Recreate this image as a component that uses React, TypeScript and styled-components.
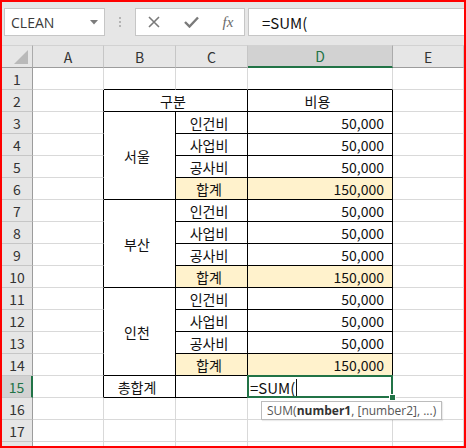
import React from "react";
import styled, { createGlobalStyle } from "styled-components";

const GRID = "#d9d9d9";
const INK = "#000000";
const GREEN = "#217346";
const FILL = "#fff2cc";
const COLS = ["A", "B", "C", "D", "E"];

const GlobalStyle = createGlobalStyle`
  html, body {
    margin: 0;
    padding: 0;
    background: #ffffff;
  }
  body {
    font-family: "Noto Sans CJK KR", "Noto Sans", sans-serif;
  }
`;

type CellDef = {
  r: number;
  c: number;
  rs?: number;
  cs?: number;
  text?: string;
  align?: "left" | "center" | "right";
  fill?: boolean;
};

const inTable = (r: number, c: number) => r >= 2 && r <= 15 && c >= 1 && c <= 3;

const groups = [
  { name: "서울", start: 3 },
  { name: "부산", start: 7 },
  { name: "인천", start: 11 },
];
const items = ["인건비", "사업비", "공사비"];

const buildCells = (): CellDef[] => {
  const list: CellDef[] = [];
  const covered = new Set<string>();
  const add = (d: CellDef) => {
    for (let i = 0; i < (d.rs || 1); i++)
      for (let j = 0; j < (d.cs || 1); j++) covered.add(`${d.r + i}-${d.c + j}`);
    list.push(d);
  };

  add({ r: 2, c: 1, cs: 2, text: "구분", align: "center" });
  add({ r: 2, c: 3, text: "비용", align: "center" });
  groups.forEach((g) => {
    add({ r: g.start, c: 1, rs: 4, text: g.name, align: "center" });
    items.forEach((it, i) => {
      add({ r: g.start + i, c: 2, text: it, align: "center" });
      add({ r: g.start + i, c: 3, text: "50,000", align: "right" });
    });
    add({ r: g.start + 3, c: 2, text: "합계", align: "center", fill: true });
    add({ r: g.start + 3, c: 3, text: "150,000", align: "right", fill: true });
  });
  add({ r: 15, c: 1, text: "총합계", align: "center" });
  add({ r: 15, c: 2 });

  // the rest is plain empty grid
  for (let r = 1; r <= 18; r++)
    for (let c = 0; c < 5; c++) if (!covered.has(`${r}-${c}`) && !(r === 15 && c === 3)) list.push({ r, c });
  return list;
};

const cells = buildCells();

const App: React.FC = () => {
  return (
    <>
      <GlobalStyle />
      <Frame>
        <FormulaBar>
          <NameBox>
            <span>CLEAN</span>
            <svg width="8" height="5" viewBox="0 0 8 5">
              <polygon points="0,0 8,0 4,4.5" fill="#7c7c7c" />
            </svg>
          </NameBox>
          <Grip>
            <Dot />
            <Dot />
            <Dot />
          </Grip>
          <ActionBox>
            <ActionIcon>
              <svg width="12" height="12" viewBox="0 0 12 12">
                <path d="M1 1 L11 11 M11 1 L1 11" stroke="#7a7a7a" strokeWidth="1.6" />
              </svg>
            </ActionIcon>
            <ActionIcon>
              <svg width="15" height="12" viewBox="0 0 15 12">
                <path d="M1 6 L5.5 10.5 L14 1.5" stroke="#7a7a7a" strokeWidth="2.4" fill="none" />
              </svg>
            </ActionIcon>
            <ActionIcon>
              <Fx>fx</Fx>
            </ActionIcon>
          </ActionBox>
          <FormulaInput>=SUM(</FormulaInput>
        </FormulaBar>

        <Sheet>
          <Corner>
            <svg width="14" height="14" viewBox="0 0 14 14">
              <polygon points="14,0 14,14 0,14" fill="#b9b9b9" />
            </svg>
          </Corner>
          {COLS.map((l, i) => (
            <ColHead key={l} $active={i === 3}>
              {l}
            </ColHead>
          ))}

          {Array.from({ length: 18 }, (_, i) => (
            <RowHead key={`rh${i}`} $row={i + 2} $active={i + 1 === 15}>
              {i < 17 ? i + 1 : ""}
            </RowHead>
          ))}

          {cells.map((d) => {
            const lastR = d.r + (d.rs || 1) - 1;
            const lastC = d.c + (d.cs || 1) - 1;
            const right = inTable(d.r, lastC) || inTable(d.r, lastC + 1) ? INK : GRID;
            const bottom = inTable(lastR, d.c) || inTable(lastR + 1, d.c) ? INK : GRID;
            return (
              <Cell
                key={`${d.r}-${d.c}`}
                $r={d.r}
                $c={d.c}
                $rs={d.rs || 1}
                $cs={d.cs || 1}
                $right={right}
                $bottom={bottom}
                $fill={!!d.fill}
                $align={d.align || "left"}
              >
                {d.text}
              </Cell>
            );
          })}

          <ActiveCell>
            =SUM(<Caret />
            <Tip>
              SUM(<b>number1</b>, [number2], ...)
            </Tip>
          </ActiveCell>
        </Sheet>
      </Frame>
    </>
  );
};

const Frame = styled.div`
  width: 466px;
  height: 448px;
  box-sizing: border-box;
  border: 2px solid #ff0000;
  overflow: hidden;
  background: #e6e6e6;
`;

const FormulaBar = styled.div`
  height: 43px;
  box-sizing: border-box;
  display: flex;
  align-items: flex-start;
  padding: 6px 0 0 2px;
  background: #e6e6e6;
`;

const Box = styled.div`
  height: 28px;
  box-sizing: border-box;
  background: #ffffff;
  border: 1px solid #c6c6c6;
  display: flex;
  align-items: center;
`;

const NameBox = styled(Box)`
  width: 101px;
  padding: 0 6px 0 6px;
  justify-content: space-between;
  font-family: "Open Sans", "Noto Sans", sans-serif;
  font-size: 14px;
  color: #3a3a3a;
`;

const Grip = styled.div`
  width: 30px;
  height: 28px;
  display: flex;
  flex-direction: column;
  align-items: center;
  justify-content: center;
  gap: 2px;
`;

const Dot = styled.span`
  width: 2px;
  height: 2px;
  background: #b4b4b4;
`;

const ActionBox = styled(Box)`
  width: 110px;
  padding: 0 0 0 6px;
  gap: 13px;
`;

const ActionIcon = styled.span`
  width: 24px;
  display: flex;
  justify-content: center;
  align-items: center;
`;

const Fx = styled.span`
  font-family: "Liberation Serif", serif;
  font-style: italic;
  font-size: 15px;
  color: #6a6a6a;
`;

const FormulaInput = styled(Box)`
  flex: 1;
  margin-left: 3px;
  padding-left: 13px;
  border-right: none;
  font-size: 15px;
  color: #111;
`;

const Sheet = styled.div`
  display: grid;
  grid-template-columns: 31px 71px 72px 72px 145px 71px;
  grid-template-rows: 23px;
  grid-auto-rows: 22px;
  background: #ffffff;
  font-size: 14px;
  color: #111;
`;

const HeadBase = styled.div`
  box-sizing: border-box;
  background: #e6e6e6;
  display: flex;
  align-items: center;
  justify-content: center;
  font-size: 14px;
  color: #333;
`;

const Corner = styled(HeadBase)`
  grid-row: 1;
  grid-column: 1;
  border-top: 1px solid #d2d2d2;
  border-right: 1px solid #ababab;
  border-bottom: 1px solid #9c9c9c;
  align-items: flex-end;
  justify-content: flex-end;
  padding: 0 4px 3px 0;
`;

const ColHead = styled(HeadBase)<{ $active: boolean }>`
  grid-row: 1;
  border-top: 1px solid #d2d2d2;
  border-right: 1px solid ${(p) => (p.$active ? "#ababab" : "#c6c6c6")};
  border-bottom: ${(p) => (p.$active ? `2px solid ${GREEN}` : "1px solid #9c9c9c")};
  background: ${(p) => (p.$active ? "#d2d2d2" : "#e6e6e6")};
  color: ${(p) => (p.$active ? GREEN : "#333")};
`;

const RowHead = styled(HeadBase)<{ $row: number; $active: boolean }>`
  grid-row: ${(p) => p.$row};
  grid-column: 1;
  border-bottom: 1px solid #c6c6c6;
  border-right: ${(p) => (p.$active ? `2px solid ${GREEN}` : "1px solid #9c9c9c")};
  background: ${(p) => (p.$active ? "#d2d2d2" : "#e6e6e6")};
  color: ${(p) => (p.$active ? GREEN : "#333")};
  padding-top: 1px;
`;

const Cell = styled.div<{
  $r: number;
  $c: number;
  $rs: number;
  $cs: number;
  $right: string;
  $bottom: string;
  $fill: boolean;
  $align: "left" | "center" | "right";
}>`
  box-sizing: border-box;
  grid-row: ${(p) => p.$r + 1} / span ${(p) => p.$rs};
  grid-column: ${(p) => p.$c + 2} / span ${(p) => p.$cs};
  border-right: 1px solid ${(p) => p.$right};
  border-bottom: 1px solid ${(p) => p.$bottom};
  background: ${(p) => (p.$fill ? FILL : "#ffffff")};
  display: flex;
  align-items: center;
  justify-content: ${(p) =>
    p.$align === "center" ? "center" : p.$align === "right" ? "flex-end" : "flex-start"};
  padding: 1px 8px 0 3px;
  white-space: nowrap;
`;

const ActiveCell = styled.div`
  grid-row: 16;
  grid-column: 5;
  position: relative;
  z-index: 2;
  box-sizing: border-box;
  border-right: 1px solid ${INK};
  border-bottom: 1px solid ${INK};
  background: #ffffff;
  display: flex;
  align-items: center;
  padding: 1px 0 0 2px;
  font-size: 15px;

  &::after {
    content: "";
    position: absolute;
    inset: -1px;
    border: 2px solid ${GREEN};
  }

  &::before {
    content: "";
    position: absolute;
    right: -4px;
    bottom: -4px;
    width: 5px;
    height: 5px;
    background: ${GREEN};
    border: 1px solid #ffffff;
    z-index: 3;
  }
`;

const Caret = styled.span`
  display: inline-block;
  width: 1px;
  height: 17px;
  background: #111;
  margin-left: 1px;
`;

const Tip = styled.div`
  position: absolute;
  top: 25px;
  left: 13px;
  z-index: 4;
  height: 19px;
  box-sizing: border-box;
  padding: 0 5px;
  display: flex;
  align-items: center;
  background: #ffffff;
  border: 1px solid #bcbcbc;
  box-shadow: 1px 1px 1px rgba(0, 0, 0, 0.08);
  font-family: "Open Sans", "Noto Sans", sans-serif;
  font-size: 12px;
  color: #555;
  white-space: nowrap;

  b {
    font-weight: 700;
    color: #333;
  }
`;

export default App;
